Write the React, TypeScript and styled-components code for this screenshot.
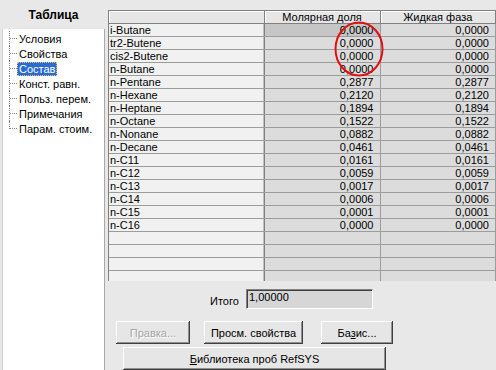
import React from 'react';
import styled, { createGlobalStyle } from 'styled-components';

const GlobalStyle = createGlobalStyle`
  html, body {
    margin: 0;
    padding: 0;
    background: #e8e8e8;
    font-family: "Liberation Sans", Arial, sans-serif;
    font-size: 11px;
    color: #000;
  }
`;

const Window = styled.div`
  display: flex;
  width: 496px;
  height: 370px;
  overflow: hidden;
  background: #e8e8e8;
`;

const LeftPanel = styled.div`
  width: 105px;
  display: flex;
  flex-direction: column;
  flex-shrink: 0;
`;

const PanelTitle = styled.div`
  height: 29px;
  display: flex;
  align-items: center;
  justify-content: center;
  font-weight: bold;
  font-size: 12px;
  padding-left: 2px;
  box-sizing: border-box;
`;

const TreeBox = styled.div`
  flex: 1;
  margin-left: 2px;
  background: #fff;
  border-left: 1px solid #d0d0d0;
  border-right: 1px solid #a8a8a8;
  padding-top: 2px;
`;

const TreeItem = styled.div`
  display: flex;
  align-items: center;
  height: 15px;
`;

const Connector = styled.span<{ $last?: boolean }>`
  position: relative;
  width: 14px;
  height: 15px;
  flex-shrink: 0;

  &::before {
    content: '';
    position: absolute;
    left: 6px;
    top: 0;
    height: ${p => (p.$last ? '8px' : '15px')};
    border-left: 1px dotted #808080;
  }

  &::after {
    content: '';
    position: absolute;
    left: 7px;
    top: 7px;
    width: 7px;
    border-top: 1px dotted #808080;
  }
`;

const TreeLabel = styled.span<{ $selected?: boolean }>`
  padding: 0 1px;
  line-height: 12px;
  white-space: nowrap;
  border: 1px ${p => (p.$selected ? 'dotted #e8c860' : 'solid transparent')};
  background: ${p => (p.$selected ? '#2b6cd4' : 'transparent')};
  color: ${p => (p.$selected ? '#fff' : '#000')};
`;

const RightPanel = styled.div`
  position: relative;
  flex: 1;
  display: flex;
  flex-direction: column;
  padding-top: 10px;
  padding-left: 3px;
  min-width: 0;
`;

const GridWrap = styled.div`
  height: 271px;
  overflow: hidden;
  border-top: 1px solid #808080;
  border-left: 1px solid #808080;
  background: #e0e0e0;
`;

const Table = styled.table`
  border-collapse: collapse;
  table-layout: fixed;
  width: 100%;
`;

const HeadCell = styled.th`
  height: 12px;
  padding: 0;
  font-weight: normal;
  text-align: center;
  line-height: 12px;
  background: #e6e6e6;
  border-right: 1px solid #808080;
  border-bottom: 1px solid #808080;
  box-shadow: inset 1px 1px #fff;
  white-space: nowrap;
  overflow: hidden;
`;

const NameCell = styled.td`
  height: 12px;
  padding: 0 0 0 1px;
  line-height: 12px;
  background: #f1f1f1;
  border-right: 1px solid #808080;
  border-bottom: 1px solid #9c9c9c;
  box-shadow: inset -1px 0 #c0c0c0;
  white-space: nowrap;
`;

const ValueCell = styled.td<{ $selected?: boolean }>`
  height: 12px;
  padding: 0 6px 0 0;
  line-height: 12px;
  text-align: right;
  background: ${p => (p.$selected ? '#c6c6c6' : '#dcdcdc')};
  border-right: 1px solid #9c9c9c;
  border-bottom: 1px solid #9c9c9c;
  white-space: nowrap;
`;

const Bottom = styled.div`
  display: flex;
  flex-direction: column;
  padding-top: 8px;
`;

const TotalRow = styled.div`
  display: flex;
  align-items: center;
  padding-left: 102px;
  height: 20px;
`;

const TotalLabel = styled.span`
  width: 35px;
  overflow: hidden;
  white-space: nowrap;
  padding-top: 4px;
`;

const TotalBox = styled.div`
  width: 127px;
  height: 20px;
  box-sizing: border-box;
  margin-left: 1px;
  background: #d6d6d6;
  border-top: 1px solid #808080;
  border-left: 1px solid #808080;
  border-right: 1px solid #fff;
  border-bottom: 1px solid #fff;
  box-shadow: inset 1px 1px #404040;
  padding: 1px 2px;
  line-height: 12px;
`;

const ButtonRow = styled.div`
  display: flex;
  padding-left: 8px;
  margin-top: 12px;
`;

const Button = styled.button<{ $width: number; $gap?: number }>`
  width: ${p => p.$width}px;
  height: 23px;
  margin-left: ${p => p.$gap ?? 0}px;
  padding: 0;
  font-family: inherit;
  font-size: 11px;
  color: #000;
  background: #e6e6e6;
  border: none;
  box-shadow: inset -1px -1px #404040, inset 1px 1px #fff, inset -2px -2px #909090;
  white-space: nowrap;

  &:disabled {
    color: #a4a4a4;
    text-shadow: 1px 1px #fff;
  }
`;

const Mnemonic = styled.span`
  text-decoration: underline;
`;

const LibraryRow = styled.div`
  display: flex;
  padding-left: 15px;
  margin-top: 3px;
`;

const Marker = styled.svg`
  position: absolute;
  left: 229px;
  top: 21px;
  width: 50px;
  height: 56px;
  pointer-events: none;
`;

const treeItems = ['Условия', 'Свойства', 'Состав', 'Конст. равн.', 'Польз. перем.', 'Примечания', 'Парам. стоим.'];

const components: [string, string][] = [
  ['i-Butane', '0,0000'],
  ['tr2-Butene', '0,0000'],
  ['cis2-Butene', '0,0000'],
  ['n-Butane', '0,0000'],
  ['n-Pentane', '0,2877'],
  ['n-Hexane', '0,2120'],
  ['n-Heptane', '0,1894'],
  ['n-Octane', '0,1522'],
  ['n-Nonane', '0,0882'],
  ['n-Decane', '0,0461'],
  ['n-C11', '0,0161'],
  ['n-C12', '0,0059'],
  ['n-C13', '0,0017'],
  ['n-C14', '0,0006'],
  ['n-C15', '0,0001'],
  ['n-C16', '0,0000'],
];

const App: React.FC = () => {
  return (
    <>
      <GlobalStyle />
      <Window>
        <LeftPanel>
          <PanelTitle>Таблица</PanelTitle>
          <TreeBox>
            {treeItems.map((item, i) => (
              <TreeItem key={item}>
                <Connector $last={i === treeItems.length - 1} />
                <TreeLabel $selected={item === 'Состав'}>{item}</TreeLabel>
              </TreeItem>
            ))}
          </TreeBox>
        </LeftPanel>

        <RightPanel>
          <GridWrap>
            <Table>
              <colgroup>
                <col style={{ width: 155 }} />
                <col style={{ width: 116 }} />
                <col />
              </colgroup>
              <thead>
                <tr>
                  <HeadCell />
                  <HeadCell>Молярная доля</HeadCell>
                  <HeadCell>Жидкая фаза</HeadCell>
                </tr>
              </thead>
              <tbody>
                {components.map(([name, value], i) => (
                  <tr key={name}>
                    <NameCell>{name}</NameCell>
                    <ValueCell $selected={i === 0}>{value}</ValueCell>
                    <ValueCell>{value}</ValueCell>
                  </tr>
                ))}
                {[0, 1, 2, 3, 4].map(i => (
                  <tr key={`empty-${i}`}>
                    <NameCell />
                    <ValueCell />
                    <ValueCell />
                  </tr>
                ))}
              </tbody>
            </Table>
          </GridWrap>

          <Bottom>
            <TotalRow>
              <TotalLabel>Итого</TotalLabel>
              <TotalBox>1,00000</TotalBox>
            </TotalRow>
            <ButtonRow>
              <Button $width={74} disabled>Правка...</Button>
              <Button $width={99} $gap={14}>Просм. свойства</Button>
              <Button $width={72} $gap={18}>
                Ба<Mnemonic>з</Mnemonic>ис...
              </Button>
            </ButtonRow>
            <LibraryRow>
              <Button $width={263}>
                <Mnemonic>Б</Mnemonic>иблиотека проб RefSYS
              </Button>
            </LibraryRow>
          </Bottom>

          <Marker viewBox="0 0 50 56">
            <ellipse cx="25" cy="28" rx="23.5" ry="26.5" fill="none" stroke="#e01010" strokeWidth="2" />
          </Marker>
        </RightPanel>
      </Window>
    </>
  );
};

export default App;
